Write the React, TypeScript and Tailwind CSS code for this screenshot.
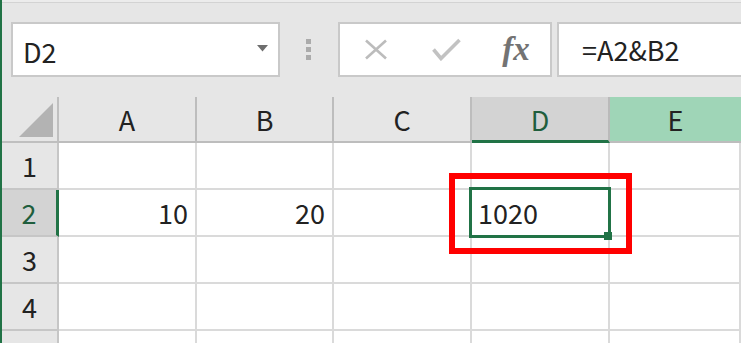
const cols = ['A', 'B', 'C', 'D', 'E']

const rows: { n: number; label: string; cells: string[] }[] = [
  { n: 1, label: '1', cells: ['', '', '', '', ''] },
  { n: 2, label: '2', cells: ['10', '20', '', '1020', ''] },
  { n: 3, label: '3', cells: ['', '', '', '', ''] },
  { n: 4, label: '4', cells: ['', '', '', '', ''] },
  // row 5 is only peeking in at the bottom edge, its number is below the fold
  { n: 5, label: '', cells: ['', '', '', '', ''] },
]

const FormulaBar = () => (
  <div className="flex h-[94px] shrink-0 items-start pt-[19px] pl-[9px] bg-[#e6e6e6]">
    <div className="flex h-[55px] w-[269px] items-center justify-between border-2 border-[#c9c9c9] bg-white pl-[10px] pr-[10px]">
      <span className="pt-[4px] text-[27px] leading-none text-[#222]">D2</span>
      <svg width="11" height="7" viewBox="0 0 11 7" className="mb-[2px]">
        <polygon points="0,0 11,0 5.5,6.5" fill="#6e6e6e" />
      </svg>
    </div>
    <div className="ml-[26px] mt-[17px] flex flex-col gap-[3px]">
      <span className="block h-[5px] w-[5px] bg-[#ababab]" />
      <span className="block h-[5px] w-[5px] bg-[#ababab]" />
      <span className="block h-[5px] w-[5px] bg-[#ababab]" />
    </div>
    <div className="ml-[27px] flex h-[55px] w-[214px] items-center border-2 border-[#c9c9c9] bg-white">
      <div className="flex w-[71px] justify-center">
        <svg width="24" height="21" viewBox="0 0 24 21">
          <path d="M2 1.5 L22 19.5 M22 1.5 L2 19.5" stroke="#bcbcbc" strokeWidth="2.6" fill="none" />
        </svg>
      </div>
      <div className="flex w-[71px] justify-center">
        <svg width="29" height="23" viewBox="0 0 29 23">
          <path d="M1.5 11.5 L9 20.5 L27.5 2" stroke="#c2c2c2" strokeWidth="3.6" fill="none" />
        </svg>
      </div>
      <div className="flex w-[68px] justify-center">
        <span className="font-['Liberation_Serif',serif] text-[33px] font-bold italic leading-none text-[#737373]">
          fx
        </span>
      </div>
    </div>
    <div className="ml-[5px] -mr-[4px] flex h-[55px] flex-1 items-center border-2 border-[#c9c9c9] bg-white pl-[23px]">
      <span className="text-[27px] leading-none text-[#222]">=A2&amp;B2</span>
    </div>
  </div>
)

const App = () => {
  return (
    <div className="flex h-[343px] w-[741px] overflow-hidden bg-[#e6e6e6] font-['Noto_Sans_CJK_JP','Noto_Sans',sans-serif]">
      <div className="w-[2px] shrink-0 bg-[#217346]" />
      <div className="flex min-w-0 flex-1 flex-col">
        <div className="h-[3px] shrink-0 border-b border-[#d3d3d3] bg-[#ececec]" />
        <FormulaBar />

        <div className="grid min-h-0 flex-1 grid-cols-[57px_138px_137px_138px_138px_1fr] grid-rows-[46px_47px_47px_47px_47px_47px]">
          {/* corner */}
          <div className="relative border-r-2 border-b-2 border-[#bfbfbf] bg-[#e6e6e6]">
            <svg width="35" height="35" viewBox="0 0 35 35" className="absolute left-[17px] top-[6px]">
              <polygon points="34,0 34,34 0,34" fill="#b3b3b3" />
            </svg>
          </div>

          {cols.map((c) => {
            const active = c === 'D'
            const near = c === 'E'
            return (
              <div
                key={c}
                className={
                  active
                    ? 'flex items-center justify-center border-r-2 border-b-[3px] border-r-[#bababa] border-b-[#217346] bg-[#d3d3d3] pt-[1px] text-[27px] leading-none text-[#1f5e3d]'
                    : near
                      ? 'flex items-center justify-center border-b-2 border-[#bdbdbd] bg-[#9fd5b7] text-[27px] leading-none text-[#222]'
                      : 'flex items-center justify-center border-r-2 border-b-2 border-[#bdbdbd] bg-[#e6e6e6] text-[27px] leading-none text-[#222]'
                }
              >
                {c}
              </div>
            )
          })}

          {rows.map((r) => (
            <>
              <div
                key={'h' + r.n}
                className={
                  r.n === 2
                    ? 'flex items-center justify-center border-r-[3px] border-b-2 border-r-[#217346] border-b-[#c6c6c6] bg-[#d3d3d3] text-[27px] leading-none text-[#1f5e3d]'
                    : 'flex items-center justify-center border-r-2 border-b-2 border-[#c6c6c6] bg-[#e6e6e6] text-[27px] leading-none text-[#222]'
                }
              >
                {r.label}
              </div>
              {r.cells.map((v, i) => {
                const selected = r.n === 2 && i === 3
                return (
                  <div
                    key={r.n + '-' + i}
                    className={
                      selected
                        ? 'relative flex items-center border-r-2 border-b-2 border-[#dadada] bg-white pl-[6px] text-[27px] leading-none text-[#222]'
                        : 'flex items-center justify-end border-r-2 border-b-2 border-[#dadada] bg-white pr-[7px] text-[27px] leading-none text-[#222]'
                    }
                  >
                    {v}
                    {selected && (
                      <>
                        <div className="pointer-events-none absolute -left-[3px] -top-[3px] h-[51px] w-[142px] border-[3px] border-[#217346]" />
                        <div className="absolute left-[132px] top-[42px] h-[8px] w-[8px] bg-[#217346]" />
                        <div className="pointer-events-none absolute -left-[23px] -top-[17px] h-[81px] w-[183px] border-[6px] border-[#ff0000]" />
                      </>
                    )}
                  </div>
                )
              })}
            </>
          ))}
        </div>
      </div>
    </div>
  )
}

export default App
